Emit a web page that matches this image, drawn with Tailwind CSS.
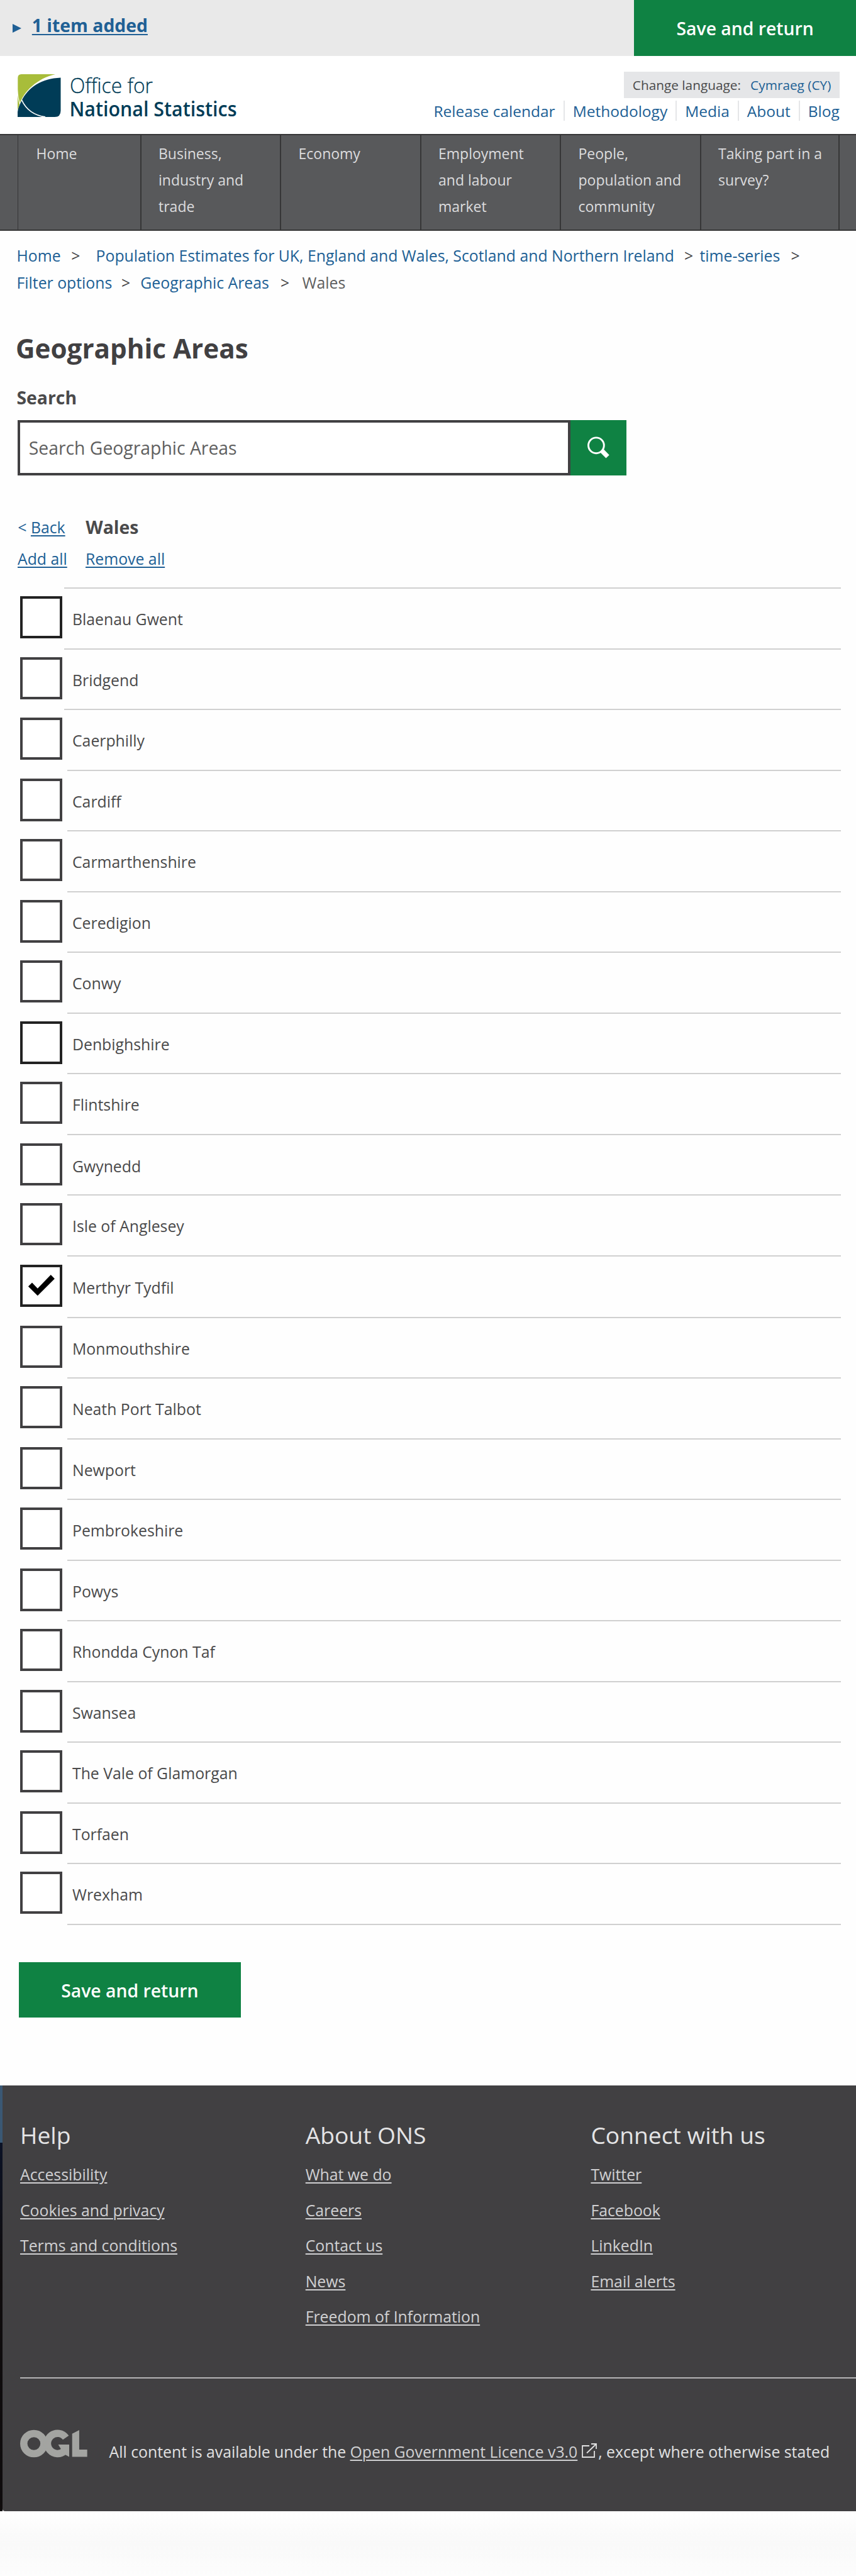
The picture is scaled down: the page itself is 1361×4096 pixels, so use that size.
<!DOCTYPE html>
<html lang="en">
<head>
<meta charset="utf-8">
<title>Geographic Areas - Office for National Statistics</title>
<script src="https://cdn.jsdelivr.net/npm/@tailwindcss/browser@4"></script>
</head>
<body class="w-[1361px] h-[4096px] overflow-hidden bg-[#fefefe] font-['Open_Sans','Noto_Sans',sans-serif] text-[24.8px] text-[#4a4a4b]">

<!-- Selection bar -->
<div class="flex h-[88.6px] bg-[#e9e9e9] justify-between">
  <a class="flex pl-[19.5px] text-[#206095] font-bold text-[28.35px] leading-[80.8px]">
    <svg class="w-[14px] h-[14px] mt-[37.5px] mr-[17.3px]" viewBox="0 0 14 14"><path d="M0 0L14 7L0 14Z" fill="#206095"/></svg>
    <span class="underline decoration-[2px] underline-offset-[3px]">1 item added</span>
  </a>
  <button class="w-[352.7px] bg-[#0f8243] text-white font-semibold text-[28.35px] leading-[91.4px] h-[88.6px]">Save and return</button>
</div>

<!-- Site header -->
<header class="flex justify-between h-[124.9px] bg-white pl-[27.8px] pr-[26.2px]">
  <svg class="w-[360px] h-[90px] mt-[19.5px] overflow-visible" viewBox="0 -10 360 90">
    <path d="M6 0H60C30 7 10 28 3.800 46Q1 38 0.300 24V6Q.3 0 6 0Z" fill="#a8bd3a"/>
    <path d="M0 33Q1 42 3 48L0 57Z" fill="#a8bd3a"/>
    <path d="M68.500 5.500V58Q68.500 68 59 68H0V60Q1 52 6 43C17 20 38 7 68.500 5.500Z" fill="#003c57"/>
    <path d="M6.500 41Q17 64 44 68" fill="none" stroke="#fff" stroke-width="1.800"/>
    <text x="83" y="29.500" font-size="33" font-family="Open Sans" font-weight="300" fill="#003c57" stroke="#003c57" stroke-width=".3" textLength="132" lengthAdjust="spacingAndGlyphs">Office for</text>
    <text x="82.500" y="67.300" font-size="33" font-family="Open Sans" font-weight="600" fill="#003c57" textLength="266" lengthAdjust="spacingAndGlyphs">National Statistics</text>
  </svg>
  <div class="flex flex-col items-end pt-[25.7px]">
    <div class="flex justify-between w-[342.5px] h-[41.6px] px-[13.500px] bg-[#e5e6e8] text-[20.8px] leading-[43.2px]">
      <span>Change language:</span><a class="text-[#206095]">Cymraeg (CY)</a>
    </div>
    <nav class="flex mt-[3.8px] h-[32.8px] text-[24.500px] leading-[33px] text-[#206095]">
      <a class="pr-[13px] border-r-2 border-[#e5e6e8]">Release calendar</a>
      <a class="px-[13px] border-r-2 border-[#e5e6e8]">Methodology</a>
      <a class="px-[13px] border-r-2 border-[#e5e6e8]">Media</a>
      <a class="px-[13px] border-r-2 border-[#e5e6e8]">About</a>
      <a class="pl-[13px]">Blog</a>
    </nav>
  </div>
</header>

<!-- Primary navigation -->
<nav class="flex h-[153.2px] bg-[#58595b] border-y-2 border-[#363637] pl-[28px] text-[23px] leading-[41.7px] text-[#dcdcde]">
  <a class="w-[194.500px] pl-[28.500px] pt-[9px] border-l border-[#363637]">Home</a>
  <a class="w-[222.500px] pl-[27.500px] pt-[9px] border-l-2 border-[#363637]">Business,<br>industry and<br>trade</a>
  <a class="w-[222.500px] pl-[27.500px] pt-[9px] border-l-2 border-[#363637]">Economy</a>
  <a class="w-[222.500px] pl-[27.500px] pt-[9px] border-l-2 border-[#363637]">Employment<br>and labour<br>market</a>
  <a class="w-[222.500px] pl-[27.500px] pt-[9px] border-l-2 border-[#363637]">People,<br>population and<br>community</a>
  <a class="w-[222px] pl-[27.500px] pt-[9px] border-x-2 border-[#363637]">Taking part in a<br>survey?</a>
</nav>

<main>
  <!-- Breadcrumb -->
  <div class="pt-[18.8px] pl-[26.500px] leading-[42.5px] text-[#206095] whitespace-nowrap">
    <div class="flex">
      <a class="w-[86.7px]">Home</a><span class="w-[39.4px] text-[#414042]">&gt;</span>
      <a class="w-[935.3px]">Population Estimates for UK, England and Wales, Scotland and Northern Ireland</a><span class="w-[24.6px] text-[#414042]">&gt;</span>
      <a class="w-[145px]">time-series</a><span class="text-[#414042]">&gt;</span>
    </div>
    <div class="flex">
      <a class="w-[166.500px]">Filter options</a><span class="w-[30.3px] text-[#414042]">&gt;</span>
      <a class="w-[222.7px]">Geographic Areas</a><span class="w-[34.600px] text-[#414042]">&gt;</span>
      <span class="text-[#5f5f60]">Wales</span>
    </div>
  </div>

  <h1 class="mt-[58.5px] pl-[25px] text-[42.2px] leading-[50px] font-bold text-[#414042]">Geographic Areas</h1>

  <!-- Search -->
  <label class="block mt-[32.8px] pl-[26.500px] text-[28.35px] leading-[40px] font-bold">Search</label>
  <div class="flex mt-[16.1px] ml-[28.2px] h-[88.6px]">
    <div class="w-[879.3px] border-4 border-[#414042] bg-white pl-[13.500px] text-[28.35px] leading-[80px] text-[#5f5f60]">Search Geographic Areas</div>
    <button class="w-[88.500px] bg-[#0f8243] pl-[26.500px]">
      <svg class="w-[36px] h-[36px]" viewBox="0 0 36 36"><circle cx="13.900" cy="14.300" r="12.400" fill="none" stroke="#fff" stroke-width="2.900"/><path d="M25.500 20L34.700 29.400L29.500 34.400L20.500 25.500Z" fill="#fff"/></svg>
    </button>
  </div>

  <!-- Actions -->
  <div class="flex mt-[61.1px] pl-[28.3px] leading-[40px] text-[#206095]">
    <div class="w-[108px]">&lt; <a class="underline decoration-[2px] underline-offset-[3px]">Back</a></div>
    <h2 class="text-[28.35px] font-bold text-[#4a4a4b]">Wales</h2>
  </div>
  <div class="flex mt-[10.6px] pl-[28px] leading-[40px] text-[#206095]">
    <div class="w-[108px]"><a class="underline decoration-[2px] underline-offset-[3px]">Add all</a></div>
    <a class="underline decoration-[2px] underline-offset-[3px]">Remove all</a>
  </div>

  <div id="areas" class="mt-[25.4px]"></div>
  <div class="ml-[107px] w-[1230px] h-[2px] bg-[#d0d0d0]"></div>

  <button class="block mt-[58.2px] ml-[30px] w-[352.7px] h-[88.6px] bg-[#0f8243] text-white font-semibold text-[28.35px] leading-[91.4px]">Save and return</button>
</main>

<!-- Footer -->
<footer class="flex mt-[108.1px] h-[676.500px]">
  <div class="w-[3.500px] flex flex-col bg-[#0f0c0d]">
    <div class="h-[91px] bg-[#3a5874]"></div>
    <div class="h-[200px] bg-linear-to-b from-[#0b1226] to-[#0f0c0d]"></div>
  </div>
  <div class="flex-1 bg-[#414042] rounded-bl-[4px] pl-[28.500px] pt-[54.2px] text-[#d0d0d2]">
    <div class="flex">
      <div class="w-[453.700px]">
        <h3 class="text-[37.2px] leading-[50px] text-[#e4e4e5]">Help</h3>
        <ul class="mt-[8.6px] leading-[56.6px] underline decoration-[1.800px] underline-offset-[3px]">
          <li>Accessibility</li><li>Cookies and privacy</li><li>Terms and conditions</li>
        </ul>
      </div>
      <div class="w-[453.700px]">
        <h3 class="text-[37.2px] leading-[50px] text-[#e4e4e5]">About ONS</h3>
        <ul class="mt-[8.6px] leading-[56.6px] underline decoration-[1.800px] underline-offset-[3px]">
          <li>What we do</li><li>Careers</li><li>Contact us</li><li>News</li><li>Freedom of Information</li>
        </ul>
      </div>
      <div>
        <h3 class="text-[37.2px] leading-[50px] text-[#e4e4e5]">Connect with us</h3>
        <ul class="mt-[8.6px] leading-[56.6px] underline decoration-[1.800px] underline-offset-[3px]">
          <li>Twitter</li><li>Facebook</li><li>LinkedIn</li><li>Email alerts</li>
        </ul>
      </div>
    </div>
    <div class="mt-[67.6px] h-[2px] bg-[#b4b4b5]"></div>
    <div class="flex mt-[71.3px] -ml-[5.4px] leading-[40px] text-[#e0e0e1] whitespace-nowrap">
      <svg class="w-[115.2px] h-[70.9px] mr-[31.8px]" viewBox="0 0 390 240" fill="none" stroke="#a3a4a1" stroke-width="39">
        <circle cx="91" cy="110" r="54.500"/>
        <path d="M263 78A54.500 54.500 0 1 0 256 149"/>
        <path d="M222 115H281V181L262 171L240 145Z" fill="#a3a4a1" stroke="none"/>
        <path d="M297 57L335 37V142H378V181H297Z" fill="#a3a4a1" stroke="none"/>
      </svg>
      <div class="mt-[24.8px]">All content is available under the <a class="underline decoration-[1.800px] underline-offset-[3px] text-[#d0d0d2]">Open Government Licence v3.0</a><svg class="inline-block align-baseline w-[24px] h-[23px] ml-[7px] mr-[2px]" viewBox="0 0 24 23" fill="none" stroke="#e0e0e1" stroke-width="1.800"><path d="M12 4H1V22H20V12M8 15.500L22.500 1.500M15 1H23V9"/></svg>, except where otherwise stated</div>
    </div>
  </div>
</footer>
<div class="h-[103px] bg-linear-to-b from-white via-[#f9f9f9] to-[#fdfdfd]"></div>

<script>
  const areas = ['Blaenau Gwent','Bridgend','Caerphilly','Cardiff','Carmarthenshire','Ceredigion','Conwy','Denbighshire','Flintshire','Gwynedd','Isle of Anglesey','Merthyr Tydfil','Monmouthshire','Neath Port Talbot','Newport','Pembrokeshire','Powys','Rhondda Cynon Taf','Swansea','The Vale of Glamorgan','Torfaen','Wrexham'];
  const unit = 1.77162;
  const lineAt = k => Math.round(527 + 54.5455 * k) * unit;
  const tick = '<svg class="w-full h-full" viewBox="4 4 59.300 59.300"><path d="M12.900 34.500L19 28.600L27.800 37.800L48.800 15.900L54.900 22.200L27.800 49.300Z" fill="#000"/></svg>';
  document.getElementById('areas').innerHTML = areas.map((name, k) => {
    const rule = k < 3 ? 'ml-[102px] w-[1235px]' : 'ml-[107px] w-[1230px]';
    const edge = [0, 7, 11].includes(k) ? 'border-[#222222]' : 'border-[#414042]';
    return `<div style="height:${lineAt(k + 1) - lineAt(k)}px">
      <div class="${rule} h-[2px] bg-[#d0d0d0]"></div>
      <div class="flex pt-[12.2px] pl-[31.9px]">
        <div class="w-[67.3px] h-[67.3px] border-4 ${edge} bg-white">${k === 11 ? tick : ''}</div>
        <span class="ml-[15.8px] leading-[72.8px]">${name}</span>
      </div></div>`;
  }).join('');
</script>
</body>
</html>
